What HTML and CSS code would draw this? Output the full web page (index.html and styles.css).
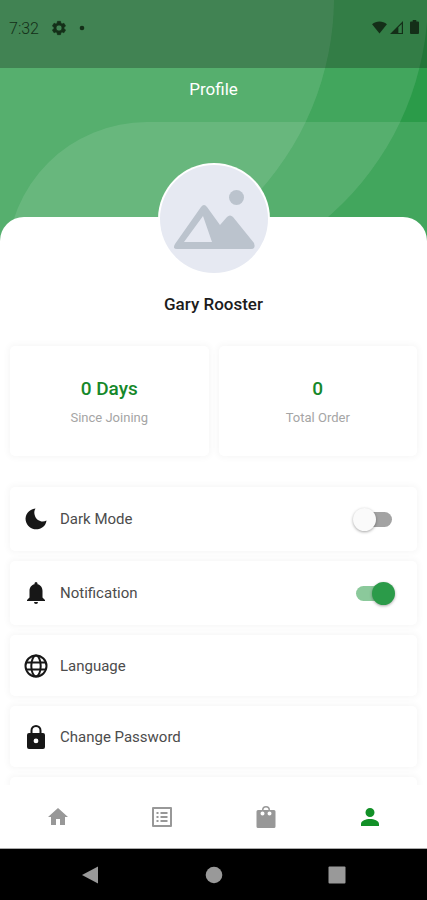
FILE: index.html
```html
<!DOCTYPE html>
<html lang="en">
<head>
<meta charset="utf-8">
<meta name="viewport" content="width=device-width, initial-scale=1">
<title>Profile</title>
<link rel="stylesheet" href="styles.css">
</head>
<body>
<div class="app">
  <header class="hero">
    <svg class="hero-art" viewBox="0 0 427 250" preserveAspectRatio="xMidYMin slice" aria-hidden="true">
      <rect width="427" height="250" fill="#2b9b49"/>
      <g fill="#fff" fill-opacity=".11">
        <circle cx="44" cy="-3" r="290"/>
        <circle cx="138" cy="-2" r="290"/>
        <path d="M7 262A140 140 0 0 1 147 122H427V262Z"/>
      </g>
    </svg>
    <div class="status">
      <div class="status-group">
        <span class="time">7:32</span>
        <svg width="16" height="16" viewBox="0 0 24 24" aria-hidden="true"><path fill="currentColor" stroke="currentColor" fill-rule="evenodd" d="M19.4 13a7.500 7.500 0 0 0 0-2l2.100-1.650a.5.5 0 0 0 .12-.64l-2-3.460a.5.5 0 0 0-.6-.22l-2.500 1a7.300 7.300 0 0 0-1.700-.98l-.38-2.650A.5.5 0 0 0 14 2h-4a.5.5 0 0 0-.48.400L9.100 5.070a7.300 7.300 0 0 0-1.700.98l-2.500-1a.5.5 0 0 0-.6.22l-2 3.460a.5.5 0 0 0 .12.64L4.600 11a7.500 7.500 0 0 0 0 2l-2.200 1.650a.5.5 0 0 0-.12.64l2 3.460c.12.22.4.3.6.22l2.500-1c.52.4 1.080.73 1.700.98l.42 2.650c.04.23.24.400.5.400h4c.24 0 .45-.17.48-.4l.38-2.650a7.300 7.300 0 0 0 1.700-.98l2.500 1c.22.08.48 0 .6-.22l2-3.460a.5.5 0 0 0-.12-.64ZM12 16.500a4.500 4.500 0 1 1 0-9a4.500 4.500 0 0 1 0 9Z"/></svg>
        <svg width="6" height="6" viewBox="0 0 6 6" aria-hidden="true"><circle cx="3" cy="3" r="2.300" fill="currentColor"/></svg>
      </div>
      <div class="status-group status-right">
        <svg width="15" height="13" viewBox="0 0 16 14" aria-hidden="true"><path fill="currentColor" d="M0 3.500C4.500-.4 11.500-.4 16 3.500L8 13.500Z"/></svg>
        <svg width="13" height="13" viewBox="0 0 14 14" aria-hidden="true"><path fill="currentColor" fill-rule="evenodd" d="M0 14L14 0V14ZM9 6.800V12.800H12.700V3.200Z"/></svg>
        <svg class="battery" width="9" height="14" viewBox="0 0 9 14" aria-hidden="true"><path fill="currentColor" d="M2.700 0h3.600v1.500H8a1 1 0 0 1 1 1V13a1 1 0 0 1-1 1H1a1 1 0 0 1-1-1V2.500a1 1 0 0 1 1-1h1.700Z"/></svg>
      </div>
    </div>
    <h1 class="title">Profile</h1>
  </header>

  <main class="panel">
    <svg class="avatar" viewBox="0 0 112 112" role="img" aria-label="Profile photo">
      <circle cx="56" cy="56" r="56" fill="#fff"/>
      <circle cx="56" cy="56" r="54" fill="#e6e9f2"/>
      <circle cx="78.500" cy="34.500" r="7.500" fill="#bbc3cd"/>
      <path fill="#bbc3cd" fill-rule="evenodd" d="M17 81L43 44Q46 40 49 44L62 62L69 54Q72 51 75 54L96 80Q98 86 93 86H19Q14 86 17 81ZM45 53L26 79H54Z"/>
    </svg>
    <h2 class="name">Gary Rooster</h2>

    <section class="stats">
      <div class="card stat"><strong>0 Days</strong><span>Since Joining</span></div>
      <div class="card stat"><strong>0</strong><span>Total Order</span></div>
    </section>

    <section class="settings">
      <label class="card row">
        <svg class="icon" viewBox="0 0 24 24" aria-hidden="true"><path d="M11.500 1.500C4.500 2.500 .8 8 1.700 13.500C3 20 9 23.500 15 22C19 20.900 22 18 22.500 13.500C18 16 12.500 13.500 11 9C10 6 10 4 11.500 1.500Z"/></svg>
        <span>Dark Mode</span><input class="switch" type="checkbox">
      </label>
      <label class="card row">
        <svg class="icon" viewBox="0 0 24 24" aria-hidden="true"><path d="M12 1a1.500 1.500 0 0 0-1.500 1.500v.8C7 4 5.500 7 5.500 10v6.500L3 19v1h18v-1l-2.500-2.500V10c0-3-1.500-6-5-6.700v-.8A1.500 1.500 0 0 0 12 1ZM10 21h4a2 2 0 0 1-4 0Z"/></svg>
        <span>Notification</span><input class="switch" type="checkbox" checked>
      </label>
      <button class="card row" type="button">
        <svg class="icon" viewBox="0 0 24 24" aria-hidden="true"><g fill="none" stroke="currentColor" stroke-width="2"><circle cx="12" cy="12" r="10.500"/><ellipse cx="12" cy="12" rx="4.700" ry="10.500"/><path d="M2 8.500H22M2 15.500H22"/></g></svg>
        <span>Language</span>
      </button>
      <button class="card row" type="button">
        <svg class="icon" viewBox="0 0 24 24" aria-hidden="true"><path fill-rule="evenodd" d="M6.500 8V5.500a5.500 5.500 0 0 1 11 0V8H19a2 2 0 0 1 2 2v12a2 2 0 0 1-2 2H5a2 2 0 0 1-2-2V10a2 2 0 0 1 2-2ZM8.500 8h7V5.500a3.500 3.500 0 0 0-7 0ZM12 13.500a2.400 2.400 0 1 0 0 4.800a2.400 2.400 0 0 0 0-4.800Z"/></svg>
        <span>Change Password</span>
      </button>
      <div class="card row"></div>
    </section>
  </main>

  <nav class="tabs" aria-label="Main">
    <a href="#home" aria-label="Home"><svg viewBox="0 0 24 24"><path d="M10 20v-6h4v6h5v-8h3L12 3L2 12h3v8Z"/></svg></a>
    <a href="#orders" aria-label="Orders"><svg viewBox="0 0 24 24"><path fill-rule="evenodd" d="M3 2H21a1 1 0 0 1 1 1V21a1 1 0 0 1-1 1H3a1 1 0 0 1-1-1V3a1 1 0 0 1 1-1ZM4 4V20H20V4ZM6.500 7h2v2h-2ZM10.500 7h7v2h-7ZM6.500 11h2v2h-2ZM10.500 11h7v2h-7ZM6.500 15h2v2h-2ZM10.500 15h7v2h-7Z"/></svg></a>
    <a href="#cart" aria-label="Cart"><svg viewBox="0 0 24 24"><path fill-rule="evenodd" d="M8 5a4 4 0 0 1 8 0h4a1.500 1.500 0 0 1 1.500 1.500V21.500A1.500 1.500 0 0 1 20 23H4a1.500 1.500 0 0 1-1.500-1.500V6.500A1.500 1.500 0 0 1 4 5ZM9.500 5h5a2.500 2.500 0 0 0-5 0ZM8.500 6.500a2 2 0 1 0 0 4a2 2 0 0 0 0-4ZM15.500 6.500a2 2 0 1 0 0 4a2 2 0 0 0 0-4Z"/></svg></a>
    <a class="active" href="#profile" aria-label="Profile" aria-current="page"><svg viewBox="0 0 24 24"><path d="M12 3a4.500 4.500 0 1 0 0 9a4.500 4.500 0 0 0 0-9ZM12 14c-4 0-9 1.500-9 5v2h18v-2c0-3.500-5-5-9-5Z"/></svg></a>
  </nav>

  <div class="system">
    <button type="button" aria-label="Back"><svg viewBox="0 0 18 18"><path d="M1 9L17 .5V17.500Z"/></svg></button>
    <button type="button" aria-label="Home screen"><svg viewBox="0 0 18 18"><circle cx="9" cy="9" r="8.300"/></svg></button>
    <button type="button" aria-label="Recent apps"><svg viewBox="0 0 18 18"><rect x=".5" y=".5" width="17" height="17" rx="1"/></svg></button>
  </div>
</div>
</body>
</html>
```

FILE: styles.css
```css
* {
  box-sizing: border-box;
}

body {
  margin: 0;
  background: #fff;
  color: #1c1c1c;
  font-family: Roboto, "Liberation Sans", sans-serif;
}

.app {
  display: flex;
  flex-direction: column;
  height: 100vh;
  overflow: hidden;
}

.hero {
  position: relative;
  flex: none;
  padding-bottom: 148px;
}

.hero-art {
  position: absolute;
  inset: 0;
  width: 100%;
  height: 100%;
}

.status {
  position: relative;
  display: flex;
  justify-content: space-between;
  height: 68px;
  padding: 18px 8px 0 9px;
  background: rgba(12, 14, 12, 0.27);
  color: #142f18;
}

.status-group {
  display: flex;
  align-items: center;
  gap: 12px;
  height: 20px;
}

.status-right {
  gap: 3px;
  height: 18px;
}

.battery {
  margin-left: 4px;
}

.time {
  font-size: 16px;
  font-weight: 300;
}

.title {
  position: relative;
  margin: 0;
  padding-top: 10px;
  color: #fff;
  font-size: 17px;
  font-weight: 400;
  line-height: 22px;
  text-align: center;
}

.panel {
  position: relative;
  flex: 1;
  min-height: 0;
  margin-top: -31px;
  padding: 0 10px;
  border-radius: 24px 24px 0 0;
  background: #fff;
  clip-path: inset(-60px 0 0 0);
}

.avatar {
  display: block;
  width: 112px;
  height: 112px;
  margin: -54px auto 0;
}

.name {
  margin: 18px 0 31px;
  font-size: 17px;
  font-weight: 500;
  line-height: 22px;
  text-align: center;
}

.card {
  border: 0;
  border-radius: 5px;
  background: #fff;
  box-shadow: 0 0 6px 2px #f7f7f7;
}

.stats {
  display: grid;
  grid-template-columns: 1fr 1fr;
  gap: 10px;
}

.stat {
  display: flex;
  flex-direction: column;
  align-items: center;
  justify-content: center;
  gap: 8px;
  height: 110px;
  padding-top: 2px;
}

.stat strong {
  color: #15882a;
  font-size: 19px;
  font-weight: 500;
  line-height: 24px;
}

.stat span {
  color: #a5a5a5;
  font-size: 13px;
  line-height: 18px;
}

.settings {
  display: grid;
  gap: 10px;
  margin-top: 31px;
}

.row {
  display: flex;
  align-items: center;
  gap: 12px;
  width: 100%;
  height: 61px;
  padding: 0 22px 0 14px;
  color: #171717;
  font: 400 15px/20px Roboto, "Liberation Sans", sans-serif;
}

label.row {
  height: 64px;
}

.row span {
  color: #4c4c4c;
}

.icon {
  width: 24px;
  height: 24px;
  fill: currentColor;
}

.switch {
  position: relative;
  width: 38px;
  height: 15px;
  margin: 0 3px 0 auto;
  border-radius: 8px;
  background: #a3a3a3;
  appearance: none;
}

.switch::before {
  content: "";
  position: absolute;
  top: -4px;
  left: -1px;
  width: 23px;
  height: 23px;
  border-radius: 50%;
  background: #fafafa;
  box-shadow: 0 1px 3px rgba(0, 0, 0, 0.35);
}

.switch:checked {
  margin-right: 1px;
  background: #8bc99b;
}

.switch:checked::before {
  right: -1px;
  left: auto;
  background: #2b9b49;
}

.tabs {
  display: grid;
  position: relative;
  grid-template-columns: repeat(4, 1fr);
  flex: none;
  height: 64px;
  padding: 0 5px 0 6px;
  border-bottom: 1px solid #aaa;
  background: #fff;
}

.tabs a {
  display: grid;
  place-items: center;
  color: #989898;
}

.tabs svg {
  width: 24px;
  height: 24px;
  fill: currentColor;
}

.tabs .active {
  color: #129027;
}

.system {
  display: flex;
  flex: none;
  align-items: center;
  justify-content: space-between;
  height: 51px;
  padding: 0 81px;
  background: #000;
}

.system button {
  padding: 0;
  border: 0;
  background: none;
}

.system svg {
  display: block;
  width: 18px;
  height: 18px;
  fill: #999;
}
```
